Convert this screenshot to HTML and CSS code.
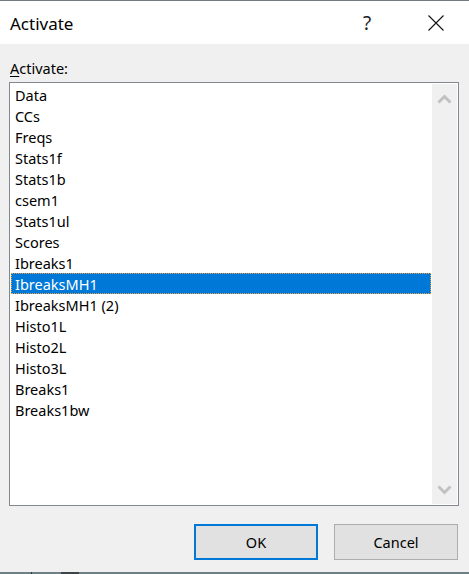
FILE: index.html
```html
<!DOCTYPE html>
<html>
<head>
<meta charset="utf-8">
<link rel="stylesheet" href="styles.css">
</head>
<body>
<div class="window">
  <div class="titlebar">
    <span class="title">Activate</span>
    <span class="help">?</span>
    <span class="close">
      <svg width="16" height="16" viewBox="0 0 16 16"><path d="M0.5 0.5 L15.5 15.5 M15.5 0.5 L0.5 15.5" stroke="#111" stroke-width="1.1" fill="none"/></svg>
    </span>
  </div>
  <div class="body">
    <div class="label"><u>A</u>ctivate:</div>
    <div class="listbox">
      <ul class="items">
        <li>Data</li>
        <li>CCs</li>
        <li>Freqs</li>
        <li>Stats1f</li>
        <li>Stats1b</li>
        <li>csem1</li>
        <li>Stats1ul</li>
        <li>Scores</li>
        <li>Ibreaks1</li>
        <li class="selected">IbreaksMH1</li>
        <li>IbreaksMH1 (2)</li>
        <li>Histo1L</li>
        <li>Histo2L</li>
        <li>Histo3L</li>
        <li>Breaks1</li>
        <li>Breaks1bw</li>
      </ul>
      <div class="scrollbar">
        <svg class="arrow" width="15" height="10" viewBox="0 0 15 10"><path d="M1.5 8.5 L7.5 2.5 L13.5 8.5" stroke="#c1c1c1" stroke-width="3" fill="none"/></svg>
        <svg class="arrow" width="15" height="10" viewBox="0 0 15 10"><path d="M1.5 1.5 L7.5 7.5 L13.5 1.5" stroke="#c1c1c1" stroke-width="3" fill="none"/></svg>
      </div>
    </div>
    <div class="buttons">
      <div class="btn default">OK</div>
      <div class="btn">Cancel</div>
    </div>
  </div>
  <div class="taskbar"></div>
</div>
</body>
</html>
```

FILE: styles.css
```css
html, body {
  margin: 0;
  padding: 0;
}
body {
  font-family: "Noto Sans", "Open Sans", sans-serif;
  color: #000;
  background: #f0f0f0;
}
.window {
  width: 469px;
  height: 574px;
  box-sizing: border-box;
  border-top: 1px solid #6f7b83;
  display: flex;
  flex-direction: column;
  background: #f0f0f0;
}
.titlebar {
  height: 43px;
  background: #fff;
  display: flex;
  align-items: center;
  padding-left: 10px;
  flex: none;
}
.title {
  font-size: 17px;
  flex: 1;
  padding-top: 1px;
}
.help {
  font-size: 19px;
  width: 10px;
  margin-right: 55px;
  color: #222;
  padding-top: 1px;
}
.close {
  width: 16px;
  height: 16px;
  margin-right: 25px;
  display: flex;
}
.body {
  flex: 1;
  display: flex;
  flex-direction: column;
  padding: 0 10px 0 9px;
}
.label {
  font-size: 14.5px;
  line-height: 20px;
  margin-top: 14px;
  padding-left: 1px;
  height: 24px;
}
.label u {
  text-decoration-thickness: 1px;
  text-underline-offset: 2px;
}
.listbox {
  height: 424px;
  box-sizing: border-box;
  border: 1px solid #828790;
  background: #fff;
  padding: 1px;
  display: flex;
  gap: 1px;
}
.items {
  list-style: none;
  margin: 0;
  padding: 0;
  width: 421px;
}
.items li {
  height: 21px;
  line-height: 20px;
  padding-top: 1px;
  font-size: 14.5px;
  padding-left: 4px;
  box-sizing: border-box;
}
.items li.selected {
  background: #0078d7;
  color: #fff;
  outline: 1px dotted #e9a04a;
  outline-offset: -1px;
}
.scrollbar {
  width: 25px;
  background: #f0f0f0;
  display: flex;
  flex-direction: column;
  justify-content: space-between;
  align-items: center;
  padding: 10px 0 9px;
  box-sizing: border-box;
}
.arrow {
  display: block;
}
.buttons {
  display: flex;
  justify-content: flex-end;
  gap: 16px;
  margin-top: 18px;
  padding-right: 1px;
}
.btn {
  width: 124px;
  height: 36px;
  box-sizing: border-box;
  background: #e1e1e1;
  border: 1px solid #adadad;
  font-size: 14.5px;
  display: flex;
  align-items: center;
  justify-content: center;
}
.btn.default {
  border: 2px solid #0078d7;
}
.taskbar {
  height: 2px;
  flex: none;
  background: linear-gradient(to right, #6e8085 0, #6e8085 31px, #2f3a3e 31px, #2f3a3e 32px, #6e8085 32px, #6e8085 61px, #3d4447 61px, #3d4447 79px, #6e8085 79px);
}
```
